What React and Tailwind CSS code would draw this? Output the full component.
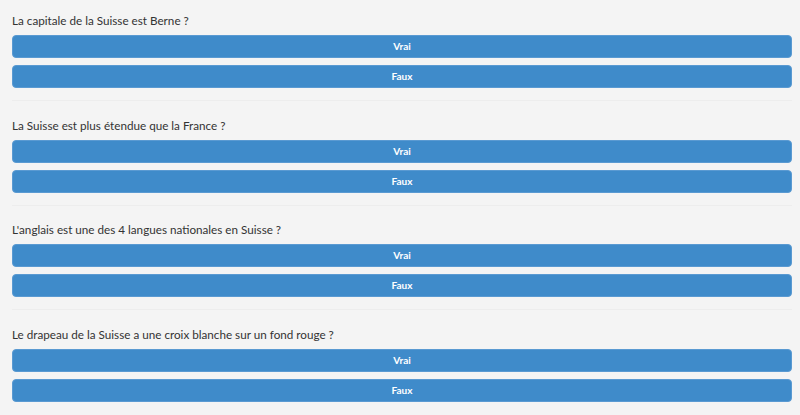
const questions = [
  'La capitale de la Suisse est Berne ?',
  'La Suisse est plus étendue que la France ?',
  "L'anglais est une des 4 langues nationales en Suisse ?",
  'Le drapeau de la Suisse a une croix blanche sur un fond rouge ?',
];

function Question({ text, last }) {
  return (
    <div>
      <div className="pt-[12px] pb-[6px] text-[11.7px] leading-[17px] text-[#333]">{text}</div>
      <div className="flex flex-col gap-[7px]">
        <button className="h-[23px] rounded-[4px] border border-[#5a9ad2] bg-[#3f8bca] text-[10px] font-bold text-white">
          Vrai
        </button>
        <button className="h-[23px] rounded-[4px] border border-[#5a9ad2] bg-[#3f8bca] text-[10px] font-bold text-white">
          Faux
        </button>
      </div>
      {!last && <div className="mt-[12px] mb-[3.5px] h-px bg-[#ededed]" />}
    </div>
  );
}

export default function App() {
  return (
    <div className="min-h-[415px] bg-[#f4f4f4] pl-[12px] pr-[8px] font-['Lato','Open_Sans',sans-serif]">
      {questions.map((q, i) => (
        <Question key={i} text={q} last={i === questions.length - 1} />
      ))}
    </div>
  );
}
